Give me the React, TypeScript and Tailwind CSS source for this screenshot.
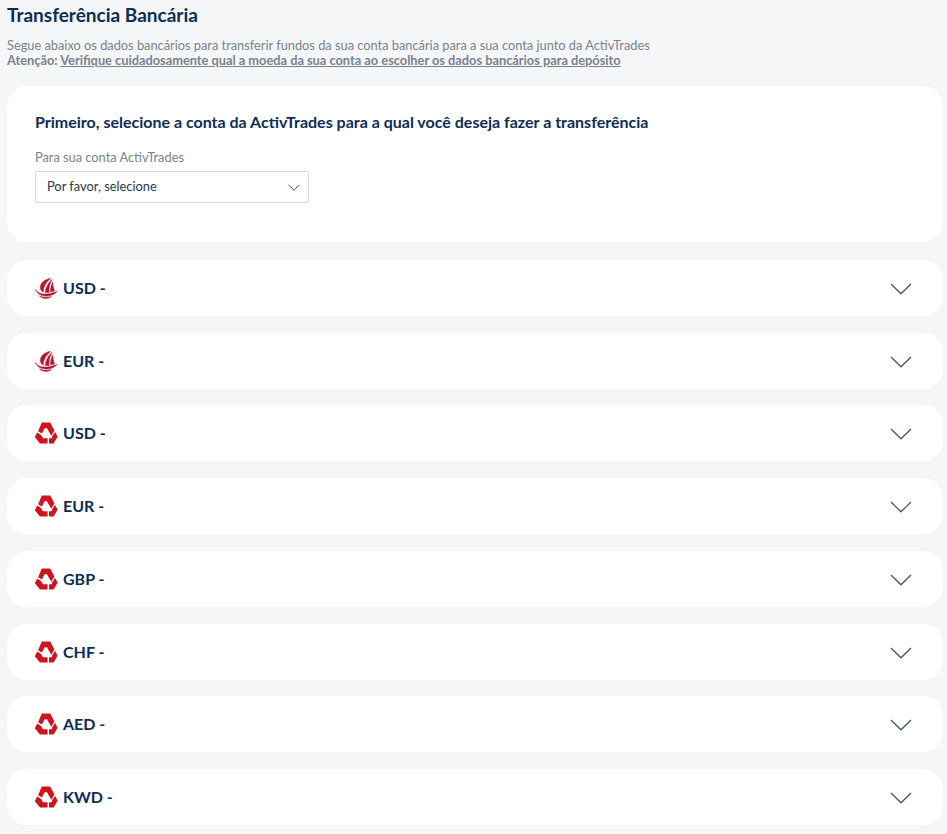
import React from 'react';

type Bank = 'ship' | 'arrows';

const rows: { bank: Bank; label: string }[] = [
  { bank: 'ship', label: 'USD -' },
  { bank: 'ship', label: 'EUR -' },
  { bank: 'arrows', label: 'USD -' },
  { bank: 'arrows', label: 'EUR -' },
  { bank: 'arrows', label: 'GBP -' },
  { bank: 'arrows', label: 'CHF -' },
  { bank: 'arrows', label: 'AED -' },
  { bank: 'arrows', label: 'KWD -' },
];

function ShipLogo() {
  return (
    <svg width="24" height="24" viewBox="0 0 24 24" className="shrink-0">
      <g fill="#b5152f" stroke="#b5152f" strokeWidth="0.5" strokeLinejoin="round">
        <path d="M16.5 2.4 C11.5 3 7 6 6.4 10.4 C6 13 7.2 15 9.4 16.2 C9 12 11.5 6.4 16.5 2.4Z" />
        <path d="M18 3.4 C14 7 11.6 11.4 11.2 16.6 L15 16.4 C14.6 12 15.6 7.6 18 3.4Z" />
        <path d="M18.8 6 C17 9.4 16.4 12.8 16.6 16 L20.6 14.8 C19.4 12.4 18.8 9.4 18.8 6Z" />
        <path d="M1.4 13.6 C3.6 17.6 8.4 18.4 13 18 C16.6 17.6 20 16.6 23 15.4 C20.8 18.2 17.4 19.6 13.4 20 C8.2 20.5 3.2 18.4 1.4 13.6Z" />
        <path d="M5.4 20 C8.6 21.4 13 21.6 17.4 20.6 C15 22.8 8.8 23.4 5.4 20Z" />
      </g>
    </svg>
  );
}

function ArrowsLogo() {
  return (
    <svg width="24" height="24" viewBox="0 0 24 24" className="shrink-0">
      <g fill="#d0141e">
        <path d="M7.8 1.6 H16.2 L20.4 9.6 L17.3 14.8 L13.9 9 L13 7.2 H10.6 L7.9 12.6 L4.1 10.2Z" />
        <path d="M3.2 11.6 L7 13.9 L9 17.3 H13.6 V22.6 H6 L0.8 16.2Z" />
        <path d="M21.2 11 L23.6 15.8 L19.6 22.6 H15 V17.3 H17.6 L18.4 16 L17.9 15.6Z" />
      </g>
    </svg>
  );
}

function BigChevron() {
  return (
    <svg width="22" height="12" viewBox="0 0 22 12" fill="none" className="shrink-0 mt-[2px]">
      <path d="M1 1 L11 10.8 L21 1" stroke="#44505e" strokeWidth="1.2" />
    </svg>
  );
}

export default function App() {
  return (
    <div
      className="w-[947px] h-[834px] overflow-hidden bg-[#f5f6f7] pl-[7px] pr-[4px] pt-[3px]"
      style={{ fontFamily: 'Lato, "Open Sans", sans-serif' }}
    >
      <h1 className="text-[19px] leading-[24px] font-bold text-[#0c2d55]">Transferência Bancária</h1>

      <div className="mt-[11px] text-[12.8px] leading-[15px] text-[#79838e]">
        <p>Segue abaixo os dados bancários para transferir fundos da sua conta bancária para a sua conta junto da ActivTrades</p>
        <p className="font-bold">
          Atenção: <span className="underline">Verifique cuidadosamente qual a moeda da sua conta ao escolher os dados bancários para depósito</span>
        </p>
      </div>

      {/* account select card */}
      <div className="mt-[18px] h-[156px] bg-white rounded-[20px] px-[28px] pt-[26px]">
        <h2 className="text-[16px] leading-[20px] font-bold text-[#0c2d55]">
          Primeiro, selecione a conta da ActivTrades para a qual você deseja fazer a transferência
        </h2>
        <label className="block mt-[17px] text-[12.8px] leading-[16px] text-[#79838e]">Para sua conta ActivTrades</label>
        <div className="mt-[6px] w-[274px] h-[32px] border border-[#d5d9de] rounded-[2px] flex items-center justify-between pl-[11px] pr-[8px]">
          <span className="text-[12.85px] text-[#26384d]">Por favor, selecione</span>
          <svg width="12" height="7" viewBox="0 0 12 7" fill="none">
            <path d="M0.6 0.8 L6 6.2 L11.4 0.8" stroke="#44505e" strokeWidth="1" />
          </svg>
        </div>
      </div>

      {/* bank accounts */}
      <div className="mt-[17.9px] flex flex-col gap-[16.75px]">
        {rows.map((row, i) => (
          <div key={i} className="h-[56px] bg-white rounded-[20px] flex items-center justify-between pl-[27px] pr-[31px]">
            <div className="flex items-center gap-[5px]">
              {row.bank === 'ship' ? <ShipLogo /> : <ArrowsLogo />}
              <span className="text-[16px] font-bold text-[#0c2d55]">{row.label}</span>
            </div>
            <BigChevron />
          </div>
        ))}
      </div>
    </div>
  );
}
